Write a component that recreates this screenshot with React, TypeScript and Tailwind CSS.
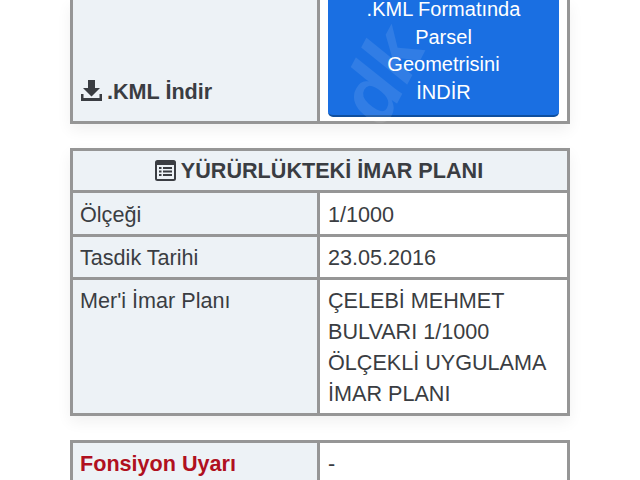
import React from 'react';

const Row = ({ label, value, labelClass = '', last = false, h, pt = 'pt-[6px]' }: { label: string; value: React.ReactNode; labelClass?: string; last?: boolean; h: string; pt?: string }) => (
  <div className={`grid grid-cols-[247px_1fr] ${h} ${last ? '' : 'border-b-[3px] border-[#969696]'}`}>
    <div className={`bg-[#edf2f6] border-r-[3px] border-[#969696] pl-[7px] ${pt} ${labelClass}`}>{label}</div>
    <div className={`pl-[8px] ${pt}`}>{value}</div>
  </div>
);

const App: React.FC = () => {
  return (
    <div className="relative w-[640px] h-[480px] overflow-hidden bg-white font-['Liberation_Sans',sans-serif] text-[21.6px] leading-[31px] text-[#3a3d42]">
      <div className="mx-[70px] w-[500px]">
        {/* kml table, top is scrolled off */}
        <div className="grid grid-cols-[247px_1fr] grid-rows-[121px] h-[124px] border-x-[3px] border-b-[3px] border-[#969696] shadow-[0_6px_14px_rgba(0,0,0,0.06)]">
          <div className="bg-[#edf2f6] border-r-[3px] border-[#969696] pl-[8px] pb-[14px] flex items-end">
            <div className="flex items-center gap-[5px] font-bold text-[#3a3d42]">
              <svg width="21" height="21" viewBox="0 0 21 21" fill="#3a3d42" className="mb-[2px]">
                <path d="M7 0h7v8h5l-8.500 8.500L2 8h5z" />
                <path d="M0 14h2.500v4h16v-4H21v7H0z" />
              </svg>
              <span>.KML İndir</span>
            </div>
          </div>
          <div className="pl-[8px] pr-[8px] pb-[4px] min-h-0">
            <div className="h-full bg-[#1a6fe2] border-b-[2px] border-[#0f4f9f] rounded-b-[5px] text-white text-center text-[20px] leading-[27.5px] flex flex-col justify-end pb-[9px]">
              <div>.KML Formatında</div>
              <div>Parsel</div>
              <div>Geometrisini</div>
              <div>İNDİR</div>
            </div>
          </div>
        </div>

        <div className="mt-[24px] border-[3px] border-[#969696] shadow-[0_6px_14px_rgba(0,0,0,0.06)]">
          <div className="h-[42px] bg-[#edf2f6] border-b-[3px] border-[#969696] flex items-center justify-center gap-[5px] font-bold">
            <svg width="21" height="21" viewBox="0 0 21 21" fill="none" className="mb-[1px]">
              <rect x="1" y="1" width="19" height="19" rx="1.500" stroke="#3a3d42" strokeWidth="2" />
              <path d="M1 3.500h19" stroke="#3a3d42" strokeWidth="3" />
              <path d="M4 8h2.500M8 8h9M4 11.500h2.500M8 11.500h9M4 15h2.500M8 15h9" stroke="#3a3d42" strokeWidth="1.800" />
            </svg>
            <span className="mr-[2px]">YÜRÜRLÜKTEKİ İMAR PLANI</span>
          </div>
          <Row h="h-[44px]" label="Ölçeği" value="1/1000" />
          <Row h="h-[43px]" pt="pt-[5px]" label="Tasdik Tarihi" value="23.05.2016" />
          <Row
            h="h-[133px]"
            last
            pt="pt-[5px]"
            label="Mer'i İmar Planı"
            value={
              <>
                <div>ÇELEBİ MEHMET</div>
                <div>BULVARI 1/1000</div>
                <div>ÖLÇEKLİ UYGULAMA</div>
                <div>İMAR PLANI</div>
              </>
            }
          />
        </div>

        <div className="mt-[24px] border-x-[3px] border-t-[3px] border-[#969696]">
          <Row h="h-[60px]" last pt="pt-[5px]" label="Fonsiyon Uyarı" labelClass="font-bold text-[#b01020]" value="-" />
        </div>
      </div>

      {/* faint watermark */}
      <div className="absolute left-[335px] top-[35px] -rotate-[62deg] origin-center text-[80px] font-bold italic text-white/10 pointer-events-none select-none leading-none">
        dk
      </div>
    </div>
  );
};

export default App;
